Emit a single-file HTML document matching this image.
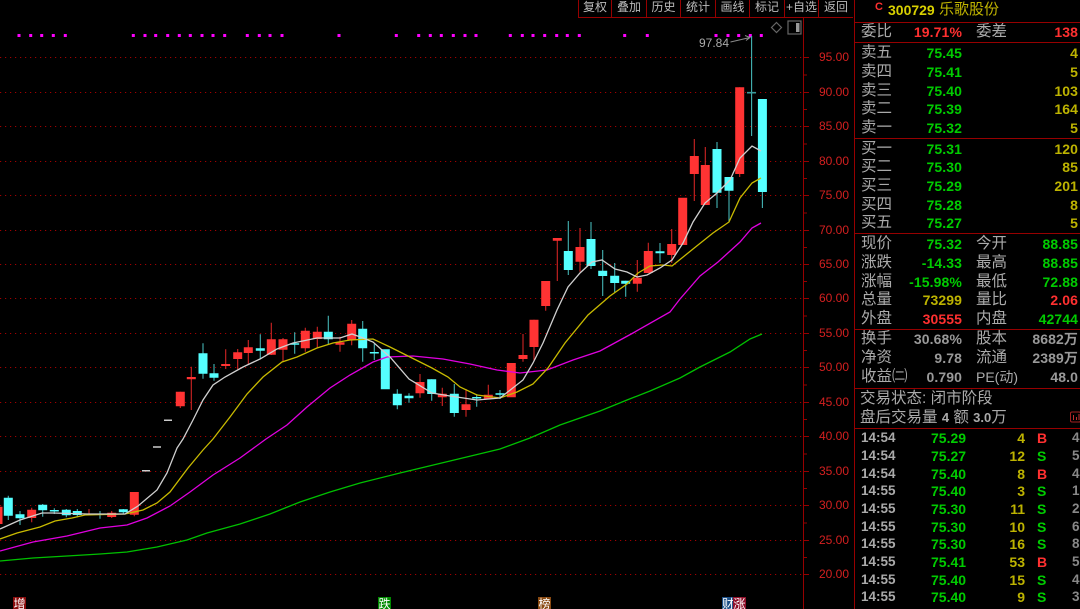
<!DOCTYPE html>
<html><head><meta charset="utf-8">
<style>
html,body{margin:0;padding:0;background:#000;width:1080px;height:609px;overflow:hidden}
#r{position:relative;width:1080px;height:609px;background:#000;overflow:hidden;font-family:"Liberation Sans","WenQuanYi Zen Hei","Noto Sans CJK SC",sans-serif;filter:blur(.3px)}
svg{position:absolute;left:0;top:0}
.t{position:absolute;white-space:nowrap;line-height:18px;height:18px;transform:translateY(-9px)}
.l{left:861px;font-size:15.5px;color:#aaa;letter-spacing:0}
.m{left:976px;font-size:15.5px;color:#aaa}
.v{right:118px;font-size:14px;font-weight:bold;letter-spacing:.1px}
.w{right:2px;font-size:14px;font-weight:bold;letter-spacing:.1px}
.g{color:#00cc00}.y{color:#bdb300}.r{color:#ff3030}.a{color:#999}
.btn{position:absolute;top:0;height:17px;line-height:15px;font-size:12px;color:#bbb;text-align:center}
.ax{position:absolute;left:819px;font-size:12px;line-height:14px;height:14px;transform:translateY(-7px);color:#d42020}
.d,.p,.n,.s,.e{transform:translateY(-8px)}
.d{left:861px;font-size:13.5px;font-weight:bold;color:#aaa}
.p{left:931px;font-size:14px;font-weight:bold;color:#00cc00}
.n{right:55px;font-size:14px;font-weight:bold;color:#bdb300}
.s{left:1037px;font-size:14px;font-weight:bold}
.e{left:1072px;font-size:13.5px;font-weight:bold;color:#888}
.mk{position:absolute;top:597px;height:14px;line-height:14px;font-size:12px;color:#fff;text-align:center;overflow:hidden}
</style></head><body><div id="r">
<svg width="1080" height="609" viewBox="0 0 1080 609">
<g stroke="#a00000" stroke-width="1" stroke-dasharray="1.2 3.8" fill="none">
<path d="M0 57.5H803M0 92.5H803M0 126.5H803M0 161.5H803M0 195.5H803M0 230.5H803M0 264.5H803M0 298.5H803M0 333.5H803M0 367.5H803M0 402.5H803M0 436.5H803M0 471.5H803M0 505.5H803M0 540.5H803M0 574.5H803"/>
</g>
<g stroke="#960000" stroke-width="1" fill="none">
<path d="M578.5 0V17.5H853M611.5 0V17M646.5 0V17M680.5 0V17M715.5 0V17M749.5 0V17M784.5 0V17M818.5 0V17"/>
<path d="M803.5 17V609M854.5 0V609"/>
<path d="M804 57.5H809M804 92.5H809M804 126.5H809M804 161.5H809M804 195.5H809M804 230.5H809M804 264.5H809M804 298.5H809M804 333.5H809M804 367.5H809M804 402.5H809M804 436.5H809M804 471.5H809M804 505.5H809M804 540.5H809M804 574.5H809"/>
<path d="M804 75H807M804 109.5H807M804 144H807M804 178.5H807M804 213H807M804 247.5H807M804 281.5H807M804 316H807M804 350.5H807M804 385H807M804 419.5H807M804 454H807M804 488.5H807M804 523H807M804 557.5H807"/>
<path d="M855 22.5H1080M855 42.5H1080M855 138.5H1080M855 233.5H1080M855 329.5H1080M855 388.5H1080M855 428.5H1080"/>
</g>
<!-- purple dots -->
<path stroke="#ff00ff" stroke-width="3" fill="none" d="M17.5 35.5h3M29.2 35.5h3M40.2 35.5h3M51.8 35.5h3M63.8 35.5h3M131.8 35.5h3M143.5 35.5h3M154.2 35.5h3M166.2 35.5h3M177.8 35.5h3M188.8 35.5h3M200.5 35.5h3M211.5 35.5h3M223.2 35.5h3M245.8 35.5h3M257.8 35.5h3M268.5 35.5h3M280.5 35.5h3M337.5 35.5h3M394.8 35.5h3M417.2 35.5h3M428.8 35.5h3M439.8 35.5h3M451.8 35.5h3M463.5 35.5h3M474.5 35.5h3M508.8 35.5h3M520.8 35.5h3M531.5 35.5h3M543.2 35.5h3M555.2 35.5h3M565.8 35.5h3M577.8 35.5h3M623.2 35.5h3M645.8 35.5h3M714.5 35.5h3M726.5 35.5h3M737.2 35.5h3M748.8 35.5h3M759.8 35.5h3"/>
<!-- dashes -->
<path stroke="#ccc" stroke-width="1.5" fill="none" d="M142 470.7H150M153 447H161M164 420.3H172"/>
<!-- red wicks -->
<path stroke="#d02424" stroke-width="1.1" fill="none" d="M31.7 507.7V522.3M89 509V515M111.7 511V518M134.3 492V516.3M180.3 391.7V408M191.3 366.7V410M225.7 349.3V369M237.7 349V369.3M248.3 340V364M271.3 322.7V355M283 338V361.7M305.3 327.7V351.7M317.3 326.7V348.3M340 336.7V351.7M351.7 320V345.3M420 374V397.7M442.3 387.7V406M466 389V416.7M488.3 384.7V399M523 334V361.7M534 319.7V360.7M545.7 281V310.7M557.3 238V281M580 228V271.7M637.3 260V291.7M648.3 242.7V273M671.7 229V263M694.3 139V201M705.3 147V205M739.7 87.3V177"/>
<!-- red bodies -->
<path stroke="#ff3333" stroke-width="9" fill="none" d="M-2 506.7V524M31.7 509.7V518M89 513.5V515M111.7 512.7V517M134.3 492V514.7M180.3 391.7V406.3M191.3 377V379.3M225.7 364V366M237.7 352.3V359M248.3 347.3V353M271.3 339.3V354.7M283 339.3V349.7M305.3 330.7V348.3M317.3 331.7V339M340 342.3V344.7M351.7 323.7V340M420 382V393.3M442.3 393.7V397.3M466 404.3V410M488.3 394.7V399M511.3 363V397.3M523 355V359M534 319.7V347M545.7 281V306M557.3 238V240.7M580 247V261.7M637.3 277.7V283.7M648.3 251V273M671.7 244V255M682.7 197.7V245M694.3 156V174M705.3 165V205M739.7 87.3V174"/>
<!-- cyan wicks -->
<path stroke="#44b4b4" stroke-width="1.1" fill="none" d="M8.3 495.7V520M20 511V525M42.7 504V516.7M54.3 508.3V514M66.3 509V517.3M77.3 509V517.3M100 511V518.7M123.3 509V514.3M203 343.3V378.7M214 364V380.7M260.3 334.3V359.3M294.7 332.3V353.7M328.3 315.7V344M362.7 321V361.7M374.3 344V360M397.3 389.3V409.3M409 393.3V402.7M431.7 379.3V400.7M454.3 384V416.7M476.7 394V406.7M500 390V399M568.3 221V275M591 222V269M602.7 250V296M614.7 263V293M625.7 280.7V296.7M660 243V263M717 142V208M729 177V221.7M751.6 36V136M762.4 99V208"/>
<!-- cyan bodies -->
<path stroke="#55ffff" stroke-width="9" fill="none" d="M8.3 497.7V515.7M20 514.3V518.3M42.7 504.7V510.3M54.3 510V511.5M66.3 509.7V515.3M77.3 511V515M100 513.5V515M123.3 509.3V512.3M203 353.3V373.7M214 373.3V377.7M260.3 348.3V350.7M294.7 343.3V344.7M328.3 331.7V339.3M362.7 328.7V348.3M374.3 352V353.5M385.3 349.3V389.3M397.3 393.7V405.3M409 395.7V398.3M431.7 379.3V394M454.3 393.7V413M476.7 397V398.5M500 393.3V394.7M568.3 251V270M591 239V266M602.7 270.7V276M614.7 275.7V283M625.7 280.7V283.7M660 251.3V253.3M717 149V192.7M729 177V190.7M762.4 99V192"/>
<path stroke="#3a9c9c" stroke-width="1.6" fill="none" d="M747 92.7H756"/>
<!-- MA60 green -->
<polyline fill="none" stroke="#00c000" stroke-width="1.3" points="0,561 33,558 67,556 100,554 127,552 157,547 187,540 207,533 240,524 270,514 300,502 330,492 360,483 400,473 450,461 500,449 530,438 560,425 600,411 627,400 650,391 680,378 700,367 730,352 750,339 762,334"/>
<!-- MA20 magenta -->
<polyline fill="none" stroke="#e000e0" stroke-width="1.3" points="0,551 33,542 67,536 100,528 127,525 147,518 170,506 190,492 213,475 240,458 266,439 287,425 307,407 330,388 350,375 373,362 387,357 413,356 443,359 470,364 497,370 520,373 547,370 573,360 600,351 633,333 670,312 680,299 700,276 718,262 740,242 752,228 761,223"/>
<!-- MA10 yellow -->
<polyline fill="none" stroke="#c8ba00" stroke-width="1.3" points="0,539 17,533 40,527 55,521 72,518 85,515 125,514 143,510 157,503 170,492 188,468 203,450 213,439 230,417 247,394 263,377 282,362 297,357 317,348 333,343 350,340 373,339 390,347 410,357 432,368 448,377 460,387 477,395 500,398 517,392 533,384 548,368 565,343 588,315 610,296 627,284 638,273 650,266 663,265 672,266 693,249 713,233 729,222 740,198 752,183 761,178"/>
<!-- MA5 white -->
<polyline fill="none" stroke="#d0d0d0" stroke-width="1.3" points="0,529 20,520 42,513 53,513 87,514 125,514 138,506 157,490 167,473 177,448 183,439 193,420 203,400 213,385 225,377 243,367 260,359 277,349 293,343 317,338 340,338 352,334 363,338 373,342 390,357 409,379 432,393 450,396 477,400 500,398 523,380 533,363 543,343 557,310 568,287 580,273 592,262 602,260 615,269 627,272 637,277 647,275 660,268 672,260 683,243 693,222 705,203 717,193 730,180 740,158 752,146 761,151"/>
<!-- arrow -->
<path fill="none" stroke="#8a8a8a" stroke-width="1" d="M730.5 42L750 37.5M745 35.5L750 37.5L746 40.5"/>
<!-- icons -->
<path fill="none" stroke="#666" stroke-width="1.2" d="M776.5 22.5L781.5 27.5L776.5 32.5L771.5 27.5Z"/>
<rect x="788" y="21" width="13" height="13" fill="none" stroke="#666" stroke-width="1.2"/>
<rect x="796" y="23" width="3.5" height="9" fill="#999"/>
<rect x="1070.5" y="412" width="10" height="10" rx="1.5" fill="none" stroke="#a02020"/>
<path stroke="#c03030" fill="none" d="M1073.5 415V420M1076.5 417V420M1079 414V420"/>
</svg>

<div class="btn" style="left:579px;width:32px">复权</div>
<div class="btn" style="left:612px;width:34px">叠加</div>
<div class="btn" style="left:647px;width:33px">历史</div>
<div class="btn" style="left:681px;width:34px">统计</div>
<div class="btn" style="left:716px;width:33px">画线</div>
<div class="btn" style="left:750px;width:34px">标记</div>
<div class="btn" style="left:785px;width:33px">+自选</div>
<div class="btn" style="left:819px;width:34px">返回</div>

<div class="t" style="left:699px;top:43px;font-size:12px;color:#aaa">97.84</div>

<div class="ax" style="top:57px">95.00</div><div class="ax" style="top:92px">90.00</div><div class="ax" style="top:126px">85.00</div><div class="ax" style="top:161px">80.00</div><div class="ax" style="top:195px">75.00</div><div class="ax" style="top:230px">70.00</div><div class="ax" style="top:264px">65.00</div><div class="ax" style="top:298px">60.00</div><div class="ax" style="top:333px">55.00</div><div class="ax" style="top:367px">50.00</div><div class="ax" style="top:402px">45.00</div><div class="ax" style="top:436px">40.00</div><div class="ax" style="top:471px">35.00</div><div class="ax" style="top:505px">30.00</div><div class="ax" style="top:540px">25.00</div><div class="ax" style="top:574px">20.00</div>

<div class="t r" style="left:875px;top:7px;font-size:11px;font-weight:bold">C</div>
<div class="t" style="left:888px;top:10px;font-size:14px;font-weight:bold;color:#d8d000">300729</div>
<div class="t" style="left:939px;top:10px;font-size:15px;color:#c0b400">乐歌股份</div>

<div class="t l" style="top:32px">委比</div><div class="t v r" style="top:32px">19.71%</div><div class="t m" style="top:32px">委差</div><div class="t w r" style="top:32px">138</div>

<div class="t l" style="top:53px">卖五</div><div class="t v g" style="top:53px">75.45</div><div class="t w y" style="top:53px">4</div>
<div class="t l" style="top:72px">卖四</div><div class="t v g" style="top:72px">75.41</div><div class="t w y" style="top:72px">5</div>
<div class="t l" style="top:91px">卖三</div><div class="t v g" style="top:91px">75.40</div><div class="t w y" style="top:91px">103</div>
<div class="t l" style="top:109px">卖二</div><div class="t v g" style="top:109px">75.39</div><div class="t w y" style="top:109px">164</div>
<div class="t l" style="top:128px">卖一</div><div class="t v g" style="top:128px">75.32</div><div class="t w y" style="top:128px">5</div>
<div class="t l" style="top:149px">买一</div><div class="t v g" style="top:149px">75.31</div><div class="t w y" style="top:149px">120</div>
<div class="t l" style="top:167px">买二</div><div class="t v g" style="top:167px">75.30</div><div class="t w y" style="top:167px">85</div>
<div class="t l" style="top:186px">买三</div><div class="t v g" style="top:186px">75.29</div><div class="t w y" style="top:186px">201</div>
<div class="t l" style="top:205px">买四</div><div class="t v g" style="top:205px">75.28</div><div class="t w y" style="top:205px">8</div>
<div class="t l" style="top:223px">买五</div><div class="t v g" style="top:223px">75.27</div><div class="t w y" style="top:223px">5</div>

<div class="t l" style="top:244px">现价</div><div class="t v g" style="top:244px">75.32</div><div class="t m" style="top:244px">今开</div><div class="t w g" style="top:244px">88.85</div>
<div class="t l" style="top:263px">涨跌</div><div class="t v g" style="top:263px">-14.33</div><div class="t m" style="top:263px">最高</div><div class="t w g" style="top:263px">88.85</div>
<div class="t l" style="top:282px">涨幅</div><div class="t v g" style="top:282px">-15.98%</div><div class="t m" style="top:282px">最低</div><div class="t w g" style="top:282px">72.88</div>
<div class="t l" style="top:300px">总量</div><div class="t v y" style="top:300px">73299</div><div class="t m" style="top:300px">量比</div><div class="t w r" style="top:300px">2.06</div>
<div class="t l" style="top:319px">外盘</div><div class="t v r" style="top:319px">30555</div><div class="t m" style="top:319px">内盘</div><div class="t w g" style="top:319px">42744</div>

<div class="t l" style="top:339px">换手</div><div class="t v a" style="top:339px">30.68%</div><div class="t m" style="top:339px">股本</div><div class="t w a" style="top:339px">8682万</div>
<div class="t l" style="top:358px">净资</div><div class="t v a" style="top:358px">9.78</div><div class="t m" style="top:358px">流通</div><div class="t w a" style="top:358px">2389万</div>
<div class="t l" style="top:377px">收益㈡</div><div class="t v a" style="top:377px">0.790</div><div class="t m" style="top:377px;font-size:14px">PE(动)</div><div class="t w a" style="top:377px">48.0</div>

<div class="t l" style="top:399px;left:860px">交易状态: 闭市阶段</div>
<div class="t l" style="top:418px;left:860px">盘后交易量 <b style="font-size:13px">4</b> 额 <b style="font-size:13px">3.0</b>万</div>

<div class="t d" style="top:437px">14:54</div><div class="t p" style="top:437px">75.29</div><div class="t n" style="top:437px">4</div><div class="t s r" style="top:437px">B</div><div class="t e" style="top:437px">4</div>
<div class="t d" style="top:455px">14:54</div><div class="t p" style="top:455px">75.27</div><div class="t n" style="top:455px">12</div><div class="t s g" style="top:455px">S</div><div class="t e" style="top:455px">5</div>
<div class="t d" style="top:473px">14:54</div><div class="t p" style="top:473px">75.40</div><div class="t n" style="top:473px">8</div><div class="t s r" style="top:473px">B</div><div class="t e" style="top:473px">4</div>
<div class="t d" style="top:490px">14:55</div><div class="t p" style="top:490px">75.40</div><div class="t n" style="top:490px">3</div><div class="t s g" style="top:490px">S</div><div class="t e" style="top:490px">1</div>
<div class="t d" style="top:508px">14:55</div><div class="t p" style="top:508px">75.30</div><div class="t n" style="top:508px">11</div><div class="t s g" style="top:508px">S</div><div class="t e" style="top:508px">2</div>
<div class="t d" style="top:526px">14:55</div><div class="t p" style="top:526px">75.30</div><div class="t n" style="top:526px">10</div><div class="t s g" style="top:526px">S</div><div class="t e" style="top:526px">6</div>
<div class="t d" style="top:543px">14:55</div><div class="t p" style="top:543px">75.30</div><div class="t n" style="top:543px">16</div><div class="t s g" style="top:543px">S</div><div class="t e" style="top:543px">8</div>
<div class="t d" style="top:561px">14:55</div><div class="t p" style="top:561px">75.41</div><div class="t n" style="top:561px">53</div><div class="t s r" style="top:561px">B</div><div class="t e" style="top:561px">5</div>
<div class="t d" style="top:579px">14:55</div><div class="t p" style="top:579px">75.40</div><div class="t n" style="top:579px">15</div><div class="t s g" style="top:579px">S</div><div class="t e" style="top:579px">4</div>
<div class="t d" style="top:596px">14:55</div><div class="t p" style="top:596px">75.40</div><div class="t n" style="top:596px">9</div><div class="t s g" style="top:596px">S</div><div class="t e" style="top:596px">3</div>

<div class="mk" style="left:13px;width:13px;background:#8a0c0c">增</div>
<div class="mk" style="left:378px;width:13px;background:#008a00">跌</div>
<div class="mk" style="left:538px;width:13px;background:#8a4a12">榜</div>
<div class="mk" style="left:722px;width:11px;background:#1c4f86">财</div>
<div class="mk" style="left:733px;width:13px;background:#90102a">涨</div>
</div></body></html>
